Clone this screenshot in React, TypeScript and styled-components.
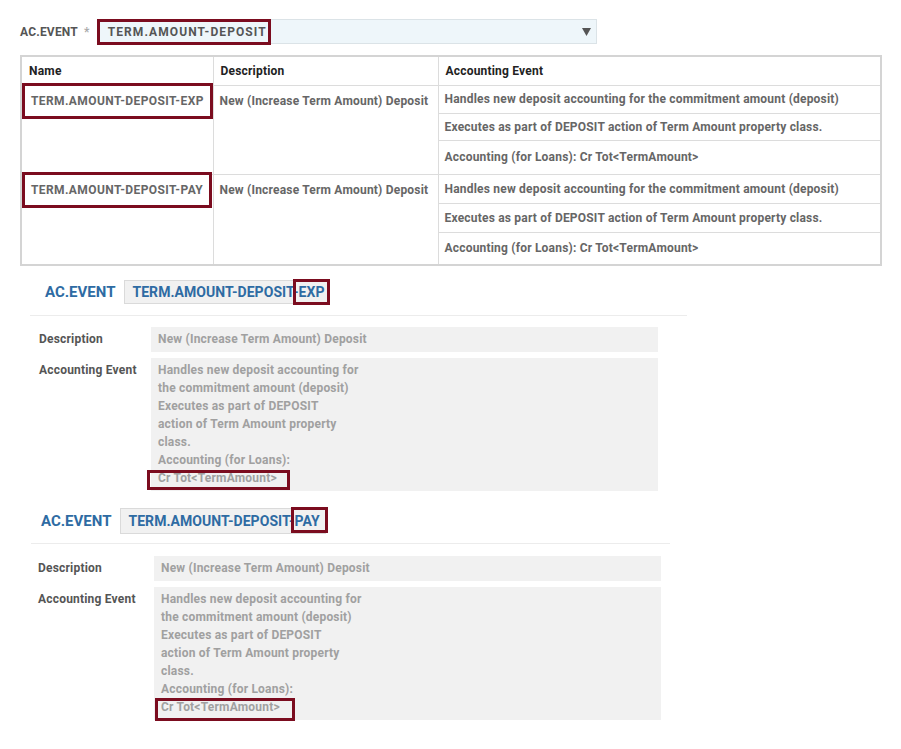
import React from "react";
import styled, { createGlobalStyle } from "styled-components";

const GlobalStyle = createGlobalStyle`
  html, body { margin: 0; padding: 0; background: #fff; }
  body {
    font-family: Roboto, "Liberation Sans", Arial, sans-serif;
    font-weight: 700;
    font-size: 12px;
    letter-spacing: 0.2px;
    color: #555;
  }
`;

const MAROON = "#7b0c1f";
const BLUE = "#2e6ba3";

const Page = styled.div`
  width: 901px;
  min-height: 749px;
  padding-top: 19px;
  box-sizing: border-box;
`;

/* annotation frame laid over the text it marks */
const Mark = styled.span<{ $t: number; $r: number; $b: number; $l: number }>`
  position: relative;
  display: inline-block;
  line-height: 16px;
  &::after {
    content: "";
    position: absolute;
    top: ${(p) => -p.$t}px;
    right: ${(p) => -p.$r}px;
    bottom: ${(p) => -p.$b}px;
    left: ${(p) => -p.$l}px;
    border: 3px solid ${MAROON};
    pointer-events: none;
  }
`;

/* ---------- top selector ---------- */
const FieldRow = styled.div`
  display: flex;
  align-items: center;
  height: 25px;
  padding-left: 20px;
`;
const FieldLabel = styled.span`
  color: #555;
  font-size: 12px;
`;
const Required = styled.span`
  color: #aaa;
  font-size: 12px;
  margin-left: 6px;
`;
const Select = styled.div`
  margin-left: 7px;
  width: 500px;
  height: 25px;
  box-sizing: border-box;
  background: #eef6fa;
  border: 1px solid #dbe3e7;
  display: flex;
  align-items: center;
  justify-content: space-between;
  padding: 0 5px 0 10px;
  color: #555;
  font-size: 12px;
  letter-spacing: 1.1px;
`;

/* ---------- table ---------- */
const Table = styled.table`
  margin: 11px 0 0 20px;
  width: 862px;
  border-collapse: collapse;
  border: 2px solid #d4d4d4;
  table-layout: fixed;
`;
const Th = styled.th`
  height: 29px;
  padding: 0 7px;
  text-align: left;
  color: #222;
  font-size: 12px;
  font-weight: 700;
  border: 1px solid #dcdcdc;
  box-sizing: border-box;
`;
const Td = styled.td<{ $h?: number; $top?: boolean; $pad?: string; $ls?: number }>`
  height: ${(p) => (p.$h ? `${p.$h}px` : "auto")};
  padding: ${(p) => p.$pad ?? "0 6px"};
  vertical-align: ${(p) => (p.$top ? "top" : "middle")};
  color: #666;
  font-size: 12px;
  letter-spacing: ${(p) => p.$ls ?? 0.2}px;
  border: 1px solid #dcdcdc;
  line-height: 16px;
  box-sizing: border-box;
  white-space: nowrap;
`;

/* ---------- detail sections ---------- */
const Section = styled.section<{ $ml: number; $w: number; $mt: number }>`
  margin-left: ${(p) => p.$ml}px;
  width: ${(p) => p.$w}px;
  margin-top: ${(p) => p.$mt}px;
`;
const SectionHead = styled.div<{ $pl: number; $pb: number }>`
  display: flex;
  align-items: center;
  padding-left: ${(p) => p.$pl}px;
  padding-bottom: ${(p) => p.$pb}px;
  border-bottom: 1px solid #ececec;
`;
const Title = styled.span`
  color: ${BLUE};
  font-size: 15px;
  letter-spacing: 0;
`;
const IdBox = styled.span<{ $h: number }>`
  margin-left: 9px;
  height: ${(p) => p.$h}px;
  box-sizing: border-box;
  background: #f1f1f1;
  border: 1px solid #dadada;
  padding: 0 5px 0 7px;
  color: ${BLUE};
  font-size: 14px;
  letter-spacing: 0.05px;
  display: flex;
  align-items: center;
`;
const Form = styled.div<{ $mt: number; $pl: number; $pr: number; $lw: number }>`
  margin-top: ${(p) => p.$mt}px;
  padding: 0 ${(p) => p.$pr}px 0 ${(p) => p.$pl}px;
  display: grid;
  grid-template-columns: ${(p) => p.$lw}px 1fr;
  row-gap: 6px;
`;
const Label = styled.div`
  color: #555;
  font-size: 12px;
  line-height: 18px;
  padding-top: 3px;
`;
const Value = styled.div<{ $pl: number }>`
  background: #f1f1f1;
  color: #a0a0a0;
  font-size: 12px;
  line-height: 18px;
  padding: 3px 6px 4px ${(p) => p.$pl}px;
`;
const Line = styled.div`
  white-space: nowrap;
`;

const Arrow = () => (
  <svg width="9" height="8" viewBox="0 0 9 8">
    <polygon points="0,0 9,0 4.5,8" fill="#555" />
  </svg>
);

type Row = { name: string; lines: string[] };
const desc = "New (Increase Term Amount) Deposit";
const accLines = [
  "Handles new deposit accounting for the commitment amount (deposit)",
  "Executes as part of DEPOSIT action of Term Amount property class.",
  "Accounting (for Loans): Cr Tot<TermAmount>",
];
const rows: Row[] = [
  { name: "TERM.AMOUNT-DEPOSIT-EXP", lines: accLines },
  { name: "TERM.AMOUNT-DEPOSIT-PAY", lines: accLines },
];
const rowHeights = [
  [28, 27, 34],
  [29, 29, 33],
];

const wrapped = [
  "Handles new deposit accounting for",
  "the commitment amount (deposit)",
  "Executes as part of DEPOSIT",
  "action of Term Amount property",
  "class.",
  "Accounting (for Loans):",
];

type SecCfg = {
  suffix: string;
  ml: number;
  w: number;
  mt: number;
  headPl: number;
  headPb: number;
  boxH: number;
  sufMark: [number, number, number, number];
  formMt: number;
  formPl: number;
  formPr: number;
  lw: number;
  valPl: number;
  crMark: [number, number, number, number];
};

const sections: SecCfg[] = [
  {
    suffix: "EXP",
    ml: 30, w: 657, mt: 14, headPl: 15, headPb: 11, boxH: 24,
    sufMark: [5, 6, 5, 6],
    formMt: 11, formPl: 9, formPr: 29, lw: 112, valPl: 7,
    crMark: [0, 13, 4, 11],
  },
  {
    suffix: "PAY",
    ml: 31, w: 639, mt: 17, headPl: 10, headPb: 9, boxH: 26,
    sufMark: [6, 8, 4, 4],
    formMt: 12, formPl: 7, formPr: 9, lw: 116, valPl: 7,
    crMark: [1, 15, 6, 6],
  },
];

export default function App() {
  return (
    <Page>
      <GlobalStyle />
      <FieldRow>
        <FieldLabel>AC.EVENT</FieldLabel>
        <Required>*</Required>
        <Select>
          <Mark $t={5} $r={4} $b={5} $l={11}>TERM.AMOUNT-DEPOSIT</Mark>
          <Arrow />
        </Select>
      </FieldRow>

      <Table>
        <colgroup>
          <col style={{ width: 192 }} />
          <col style={{ width: 225 }} />
          <col />
        </colgroup>
        <thead>
          <tr>
            <Th>Name</Th>
            <Th>Description</Th>
            <Th>Accounting Event</Th>
          </tr>
        </thead>
        <tbody>
          {rows.map((r, ri) => (
            <React.Fragment key={r.name}>
              {r.lines.map((l, li) => (
                <tr key={li}>
                  {li === 0 && (
                    <>
                      <Td rowSpan={3} $top $pad="7px 9px" $ls={0.4}>
                        <Mark $t={10} $r={9} $b={10} $l={9}>{r.name}</Mark>
                      </Td>
                      <Td rowSpan={3} $top $pad="7px 6px">{desc}</Td>
                    </>
                  )}
                  <Td $h={rowHeights[ri][li]}>{l}</Td>
                </tr>
              ))}
            </React.Fragment>
          ))}
        </tbody>
      </Table>

      {sections.map((s) => (
        <Section key={s.suffix} $ml={s.ml} $w={s.w} $mt={s.mt}>
          <SectionHead $pl={s.headPl} $pb={s.headPb}>
            <Title>AC.EVENT</Title>
            <IdBox $h={s.boxH}>
              TERM.AMOUNT-DEPOSIT-
              <Mark $t={s.sufMark[0]} $r={s.sufMark[1]} $b={s.sufMark[2]} $l={s.sufMark[3]}>
                {s.suffix}
              </Mark>
            </IdBox>
          </SectionHead>
          <Form $mt={s.formMt} $pl={s.formPl} $pr={s.formPr} $lw={s.lw}>
            <Label>Description</Label>
            <Value $pl={s.valPl}>{desc}</Value>
            <Label>Accounting Event</Label>
            <Value $pl={s.valPl}>
              {wrapped.map((w) => (
                <Line key={w}>{w}</Line>
              ))}
              <Line>
                <Mark $t={s.crMark[0]} $r={s.crMark[1]} $b={s.crMark[2]} $l={s.crMark[3]}>
                  Cr Tot&lt;TermAmount&gt;
                </Mark>
              </Line>
            </Value>
          </Form>
        </Section>
      ))}
    </Page>
  );
}
